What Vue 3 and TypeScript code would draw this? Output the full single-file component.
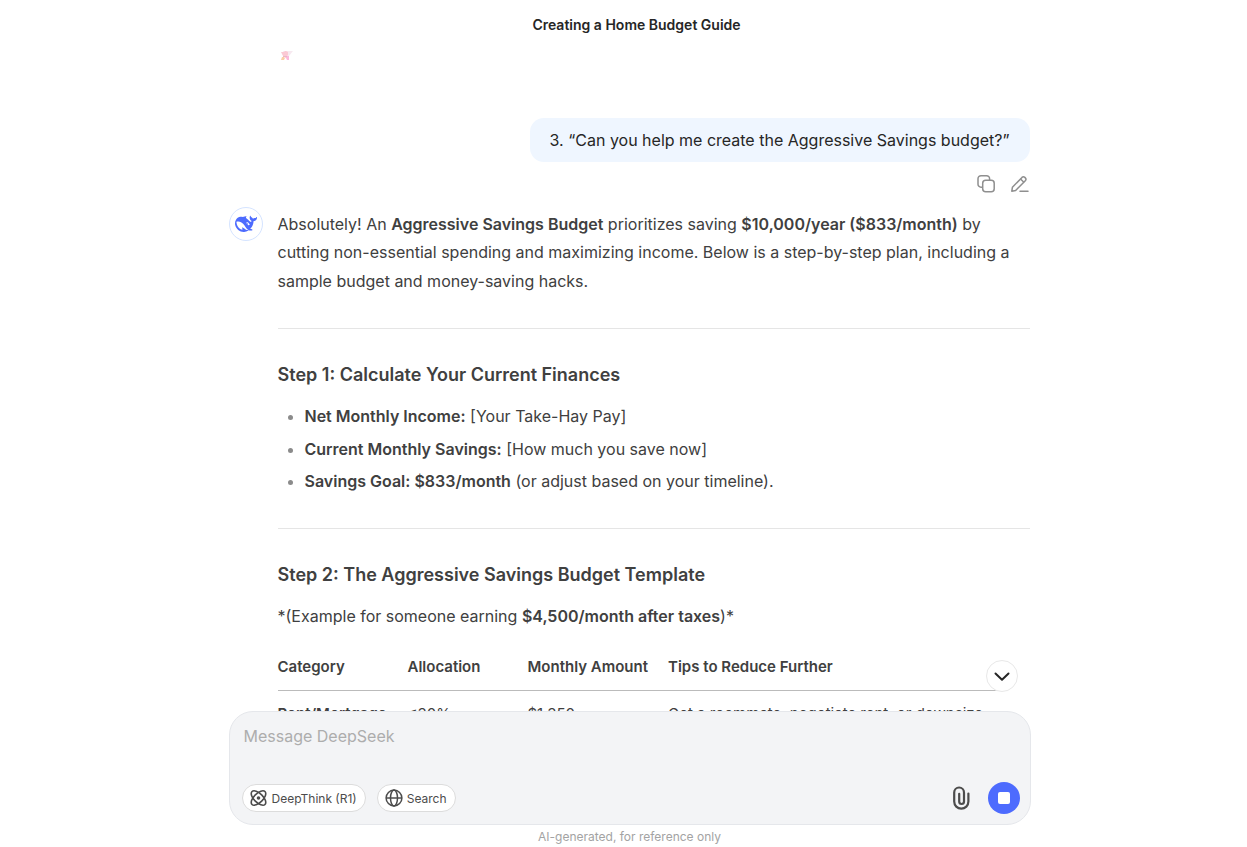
<script setup lang="ts">
import { ref } from 'vue'

interface Fact {
  label: string
  text: string
}

interface BudgetRow {
  category: string
  allocation: string
  amount: string
  tip: string
}

const draft = ref('')

const facts: Fact[] = [
  { label: 'Net Monthly Income:', text: '[Your Take-Hay Pay]' },
  { label: 'Current Monthly Savings:', text: '[How much you save now]' },
  { label: 'Savings Goal: $833/month', text: '(or adjust based on your timeline).' },
]

const columns: string[] = ['Category', 'Allocation', 'Monthly Amount', 'Tips to Reduce Further']

const rows: BudgetRow[] = [
  {
    category: 'Rent/Mortgage',
    allocation: '≤30%',
    amount: '$1,350',
    tip: 'Get a roommate, negotiate rent, or downsize.',
  },
]
</script>

<template>
  <div class="chat">
    <header class="topbar">
      <h1>Creating a Home Budget Guide</h1>
    </header>

    <main class="thread">
      <div class="column">
        <div class="previous">
          <svg width="16" height="10" viewBox="0 0 16 10" aria-hidden="true">
            <path d="M5 1h10l-4 5H7z" fill="#f7e9f0" />
            <path d="M3 2h3l1-1h1l2 1v3l-2 2-3-1z" fill="#fbc9d4" />
            <path d="M8 6h3v4H9L8 8H7z" fill="#fdb9dc" />
            <path d="M4 7h2l1 1-1 2H3z" fill="#fbcfa8" />
            <path d="M5 6h4v1H5z" fill="#eab8c6" />
          </svg>
        </div>

        <section class="question">
          <p class="bubble">3. “Can you help me create the Aggressive Savings budget?”</p>
          <div class="actions">
            <button type="button" aria-label="Copy">
              <svg width="20" height="20" viewBox="0 0 20 20" fill="none" stroke="currentColor" stroke-width="1.5">
                <rect x="6.7" y="6.2" width="11.5" height="11.5" rx="3" />
                <path d="M6 13.2H5a3 3 0 0 1-3-3V4.7a3 3 0 0 1 3-3h5.6a3 3 0 0 1 3 3V6" />
              </svg>
            </button>
            <button type="button" aria-label="Edit">
              <svg width="20" height="20" viewBox="0 0 20 20" fill="none" stroke="currentColor" stroke-width="1.5" stroke-linecap="round" stroke-linejoin="round">
                <path d="M1.8 17.2l.6-3.9L12 3.4a2 2 0 0 1 2.8 0l.5.5a2 2 0 0 1 0 2.8L5.6 16.5z" />
                <path d="M10.8 5.2l2.8 2.8M10 17.2h8" />
              </svg>
            </button>
          </div>
        </section>

        <section class="answer">
          <div class="avatar">
            <svg width="22" height="22" viewBox="0 0 24 24" fill="#4d6bfe" aria-hidden="true">
              <path d="M23.748 4.482c-.254-.124-.364.113-.512.234-.051.039-.094.09-.137.136-.372.397-.806.657-1.373.626-.829-.046-1.537.214-2.163.848-.133-.782-.575-1.248-1.247-1.548-.352-.156-.708-.311-.955-.65-.172-.241-.219-.51-.305-.774-.055-.16-.11-.323-.293-.35-.2-.031-.278.136-.356.276-.313.572-.434 1.202-.422 1.84.027 1.436.633 2.58 1.838 3.393.137.093.172.187.129.323-.082.28-.18.552-.266.833-.055.179-.137.217-.329.14a5.526 5.526 0 01-1.736-1.18c-.857-.828-1.631-1.742-2.597-2.458a11.365 11.365 0 00-.689-.471c-.985-.957.13-1.743.388-1.836.27-.098.093-.432-.779-.428-.872.004-1.67.295-2.687.684a3.055 3.055 0 01-.465.137 9.597 9.597 0 00-2.883-.102c-1.885.21-3.39 1.102-4.497 2.623C.082 8.606-.231 10.684.152 12.85c.403 2.284 1.569 4.175 3.36 5.653 1.858 1.533 3.997 2.284 6.438 2.14 1.482-.085 3.133-.284 4.994-1.86.47.234.962.327 1.78.397.63.059 1.236-.03 1.705-.128.735-.156.684-.837.419-.961-2.155-1.004-1.682-.595-2.113-.926 1.096-1.296 2.746-2.642 3.392-7.003.05-.347.007-.565 0-.845-.004-.17.035-.237.23-.256a4.173 4.173 0 001.545-.475c1.396-.763 1.96-2.015 2.093-3.517.02-.23-.004-.467-.247-.588zM11.581 18c-2.089-1.642-3.102-2.183-3.52-2.16-.392.024-.321.471-.235.763.09.288.207.486.371.739.114.167.192.416-.113.603-.673.416-1.842-.14-1.897-.167-1.361-.802-2.5-1.86-3.301-3.307-.774-1.393-1.224-2.887-1.298-4.482-.02-.386.093-.522.477-.592a4.696 4.696 0 011.529-.039c2.132.312 3.946 1.265 5.468 2.774.868.86 1.525 1.887 2.202 2.891.72 1.066 1.494 2.082 2.48 2.914.348.292.625.514.891.677-.802.09-2.14.11-3.054-.614zm1-6.44a.306.306 0 01.415-.287.302.302 0 01.2.288.306.306 0 01-.31.307.303.303 0 01-.304-.308zm3.11 1.596c-.2.081-.399.151-.59.16a1.245 1.245 0 01-.798-.254c-.274-.23-.47-.358-.552-.758a1.73 1.73 0 01.016-.588c.07-.327-.008-.537-.239-.727-.187-.156-.426-.199-.688-.199a.559.559 0 01-.254-.078c-.11-.054-.2-.19-.114-.358.028-.054.16-.186.192-.21.356-.202.767-.136 1.146.016.352.144.618.408 1.001.782.391.451.462.576.685.914.176.265.336.537.445.848.067.195-.019.354-.25.452z" />
            </svg>
          </div>
          <div class="prose">
            <p>
              Absolutely! An <strong>Aggressive Savings Budget</strong> prioritizes saving
              <strong>$10,000/year ($833/month)</strong> by cutting non-essential spending and
              maximizing income. Below is a step-by-step plan, including a sample budget and
              money-saving hacks.
            </p>
            <hr />
            <h2>Step 1: Calculate Your Current Finances</h2>
            <ul>
              <li v-for="fact in facts" :key="fact.label">
                <strong>{{ fact.label }}</strong> {{ fact.text }}
              </li>
            </ul>
            <hr />
            <h2>Step 2: The Aggressive Savings Budget Template</h2>
            <p>*(Example for someone earning <strong>$4,500/month after taxes</strong>)*</p>
            <table>
              <thead>
                <tr>
                  <th v-for="name in columns" :key="name" scope="col">{{ name }}</th>
                </tr>
              </thead>
              <tbody>
                <tr v-for="row in rows" :key="row.category">
                  <td><strong>{{ row.category }}</strong></td>
                  <td>{{ row.allocation }}</td>
                  <td>{{ row.amount }}</td>
                  <td>{{ row.tip }}</td>
                </tr>
              </tbody>
            </table>
          </div>
        </section>
      </div>
    </main>

    <footer class="dock">
      <form class="composer" @submit.prevent>
        <button type="button" class="jump" aria-label="Scroll to bottom">
          <svg width="20" height="20" viewBox="0 0 20 20" fill="none" stroke="currentColor" stroke-width="2" stroke-linecap="round" stroke-linejoin="round">
            <path d="M3.5 7.5l6.5 6.3 6.5-6.3" />
          </svg>
        </button>
        <textarea v-model="draft" rows="2" placeholder="Message DeepSeek" aria-label="Message DeepSeek"></textarea>
        <div class="tools">
          <button type="button" class="chip">
            <svg width="18" height="18" viewBox="0 0 18 18" fill="none" stroke="currentColor" stroke-width="1.6">
              <ellipse cx="8.5" cy="9" rx="9.2" ry="4.5" transform="rotate(45 8.5 9)" />
              <ellipse cx="8.5" cy="9" rx="9.2" ry="4.5" transform="rotate(-45 8.5 9)" />
              <circle cx="8.5" cy="9" r="1.8" fill="currentColor" stroke="none" />
            </svg>
            DeepThink (R1)
          </button>
          <button type="button" class="chip">
            <svg width="18" height="18" viewBox="0 0 18 18" fill="none" stroke="currentColor" stroke-width="1.5">
              <circle cx="9" cy="9" r="7.9" />
              <ellipse cx="9" cy="9" rx="3.5" ry="7.9" />
              <path d="M1 9h16" />
            </svg>
            Search
          </button>
          <span class="spacer"></span>
          <button type="button" class="attach" aria-label="Attach file">
            <svg width="18" height="24" viewBox="0 0 18 24" fill="none" stroke="currentColor" stroke-width="2.2" stroke-linecap="round">
              <path d="M16.4 7.6v8a7.1 7.1 0 0 1-14.2 0V6.4a4.9 4.9 0 0 1 9.8 0v9.2a2.4 2.4 0 0 1-4.8 0V7.8" />
            </svg>
          </button>
          <button type="button" class="stop" aria-label="Stop generating">
            <span class="square"></span>
          </button>
        </div>
      </form>
      <p class="note">AI-generated, for reference only</p>
    </footer>
  </div>
</template>

<style>
body {
  margin: 0;
}
</style>

<style scoped>
.chat {
  display: flex;
  flex-direction: column;
  height: 100vh;
  overflow: hidden;
  box-sizing: border-box;
  background: #fff;
  color: #404040;
  font-family: Inter, "Noto Sans", sans-serif;
  font-size: 16px;
}

.chat button {
  display: flex;
  align-items: center;
  justify-content: center;
  padding: 0;
  border: 0;
  background: none;
  color: inherit;
  font: inherit;
  cursor: pointer;
}

.chat svg {
  flex: none;
  display: block;
}

.topbar {
  flex: none;
  display: flex;
  align-items: center;
  justify-content: center;
  height: 50px;
  padding-left: 26px;
}

.topbar h1 {
  margin: 0;
  color: #262626;
  font-size: 14px;
  font-weight: 600;
  line-height: 20px;
}

.thread {
  flex: 1;
  min-height: 0;
  overflow: hidden;
  padding: 0 12px 0 24px;
}

.column,
.composer {
  width: 100%;
  max-width: 802px;
  margin: 0 auto;
  box-sizing: border-box;
}

.previous {
  height: 68px;
  padding-left: 49px;
}

.question {
  display: flex;
  flex-direction: column;
  align-items: flex-end;
  padding-right: 1px;
}

.bubble {
  margin: 0;
  padding: 8px 20px;
  border-radius: 14px;
  background: #eff6ff;
  color: #262626;
  line-height: 28px;
}

.actions {
  display: flex;
  gap: 14px;
  margin-top: 12px;
  color: #8f8f8f;
}

.answer {
  display: flex;
  gap: 15px;
  margin-top: 13px;
  padding-right: 1px;
}

.avatar {
  flex: none;
  display: flex;
  align-items: center;
  justify-content: center;
  width: 34px;
  height: 34px;
  box-sizing: border-box;
  border: 1px solid #d5e4ff;
  border-radius: 50%;
}

.prose {
  flex: 1;
  min-width: 0;
  padding-top: 3px;
  line-height: 1.78;
}

.prose p {
  margin: 0;
  padding-bottom: 1px;
}

.prose strong {
  font-weight: 600;
}

.prose hr {
  height: 1px;
  margin: 32px 0;
  border: 0;
  background: #e5e5e5;
}

.prose h2 {
  margin: 0 0 13px;
  font-size: 18px;
  font-weight: 600;
  line-height: 28px;
}

.prose ul {
  margin: 0;
  padding-left: 27px;
}

.prose li + li {
  margin-top: 4px;
}

.prose li::marker {
  color: #8b8b8b;
}

.prose table {
  margin-top: 12px;
  border-collapse: collapse;
  font-size: 15px;
  line-height: 25px;
  white-space: nowrap;
}

.prose th,
.prose td {
  padding: 11px 20px 11px 0;
  text-align: left;
}

.prose td {
  padding-top: 10px;
}

.prose th {
  min-width: 100px;
  border-bottom: 1px solid #bbb;
  font-weight: 600;
}

.prose th:first-child {
  min-width: 110px;
}

.dock {
  position: relative;
  flex: none;
  margin-top: -24px;
  padding: 0 12px 0 24px;
}

.composer {
  position: relative;
  padding: 10px;
  padding-left: 12px;
  border: 1px solid #e5e7eb;
  border-radius: 24px;
  background: #f3f4f6;
}

.composer textarea {
  display: block;
  width: 100%;
  height: 60px;
  box-sizing: border-box;
  padding: 0 2px;
  border: 0;
  outline: 0;
  resize: none;
  background: transparent;
  color: #262626;
  font: inherit;
  line-height: 28px;
}

.composer textarea::placeholder {
  color: #adadad;
}

.tools {
  display: flex;
  align-items: center;
  gap: 11px;
}

.chat .chip {
  gap: 4px;
  height: 28px;
  padding: 0 8px 0 7px;
  border: 1px solid #dcdcdc;
  border-radius: 14px;
  background: #fff;
  color: #4c4c4c;
  font-size: 12px;
}

.spacer {
  flex: 1;
}

.chat .attach {
  margin-right: 7px;
  color: #4c4c4c;
}

.chat .stop {
  width: 32px;
  height: 32px;
  border-radius: 50%;
  background: #4d6bfe;
}

.square {
  width: 12px;
  height: 12px;
  border-radius: 2px;
  background: #fff;
}

.chat .jump {
  position: absolute;
  top: -52px;
  right: 12px;
  width: 32px;
  height: 32px;
  border: 1px solid #e8e8e8;
  border-radius: 50%;
  background: #fff;
  color: #262626;
}

.note {
  margin: 3px 0 0;
  padding-bottom: 1px;
  color: #a3a3a3;
  font-size: 12px;
  line-height: 18px;
  text-align: center;
}
</style>
